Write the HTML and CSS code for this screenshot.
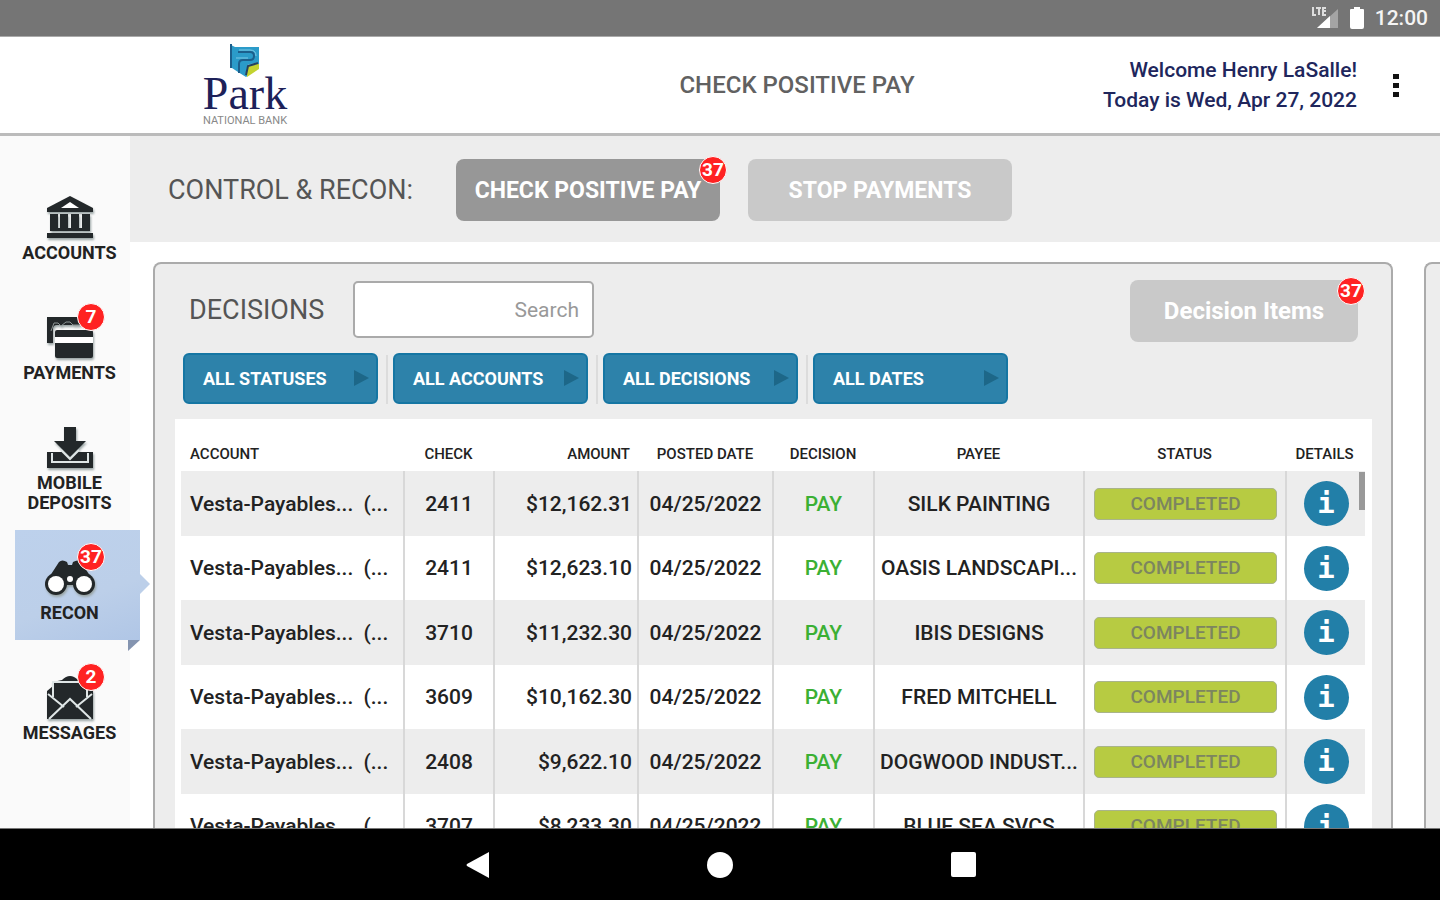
FILE: index.html
```html
<!DOCTYPE html>
<html lang="en">

<head>
    <meta charset="utf-8">
    <meta name="viewport" content="width=device-width, initial-scale=1.0">
    <title>Check Positive Pay</title>
    <link rel="stylesheet" href="styles.css">
</head>

<body>
    <div class="status-bar">
        <svg class="signal" width="28" height="24" viewBox="0 0 28 24">
            <path d="M27 3v19H6z" fill="#a4a4a4" />
            <path d="M19 10v12H6z" fill="#fff" />
            <path d="M2 1v8h3M5 2h5M8 2v7M15 2h-3v7h3M12 5h3" fill="none" stroke="#ddd" stroke-width="2" />
        </svg>
        <svg class="battery" width="16" height="24" viewBox="0 0 16 24">
            <path d="M5 1h6v2h3q1 0 1 1v17q0 2-2 2H3q-2 0-2-2V4q0-1 1-1h3z" fill="#fff" />
        </svg>
        <span>12:00</span>
    </div>

    <header class="header">
        <div class="logo">
            <svg width="30" height="34" viewBox="0 0 30 34">
                <path d="M1 1l4 2h24v21l-6 4-7 5-8-5-6-4z" fill="#2b9bc9" />
                <path d="M17 24l3-4h9v5l-12 8z" fill="#c3d32f" />
                <path d="M1 0v24M8 8h12q4 0 4 4t-4 4h-7q-4 0-4 4v9" fill="none" stroke="#1c5f8c" stroke-width="2" />
                <path d="M9 6h11q6 0 6 6M6 14h12M16 30l2-9 10-2" fill="none" stroke="#7cc9e6" stroke-width="1" />
                <path d="M16 31l2-9 10-3" fill="none" stroke="#25415f" stroke-width="2" />
            </svg>
            <div class="logo-name">Park</div>
            <div class="logo-sub">NATIONAL BANK</div>
        </div>
        <h1 class="title">CHECK POSITIVE PAY</h1>
        <div class="user">
            <p class="welcome">Welcome Henry LaSalle!<br>Today is Wed, Apr 27, 2022</p>
            <button class="more" aria-label="More">
                <i></i><i></i><i></i>
            </button>
        </div>
    </header>

    <div class="content">
        <nav class="sidebar">
            <a class="nav-item" href="#">
                <svg class="nav-icon" width="48" height="48" viewBox="0 0 48 48">
                    <path d="M24 1L1 13v4h46v-4z" />
                    <path d="M24 7l-9 6h18z" fill="#fff" />
                    <path d="M4 19h8v14H4zM14 19h8v14h-8zM25 19h8v14h-8zM36 19h8v14h-8zM4 33h40v3H4zM1 38h46v5H1z" />
                </svg>
                <span>ACCOUNTS</span>
            </a>
            <a class="nav-item" href="#">
                <svg class="nav-icon" width="48" height="48" viewBox="0 0 48 48">
                    <path d="M1 2h36v8H11q-4 0-4 4v14H1z" />
                    <path d="M5 16l3-8h4l3 3 5-4h4l3 3h6" fill="none" stroke="#8d9595" stroke-width="1" />
                    <rect x="9" y="15" width="38" height="28" rx="2" />
                    <path d="M9 22h38v6H9z" fill="#fff" />
                </svg>
                <b class="badge">7</b>
                <span>PAYMENTS</span>
            </a>
            <a class="nav-item" href="#">
                <svg class="nav-icon" width="48" height="48" viewBox="0 0 48 48">
                    <path d="M18 2h12v14h10L24 32 8 16h10z" />
                    <path d="M1 27h8l8 0 7 7 7-7h16v16H1z" />
                    <path d="M6 28v9h36v-9M15 25l9 9 9-9" fill="none" stroke="#dfe6e6" stroke-width="2" />
                </svg>
                <span>MOBILE<br>DEPOSITS</span>
            </a>
            <a class="nav-item active" href="#">
                <svg class="nav-icon" width="52" height="48" viewBox="0 0 52 48">
                    <path d="M4 24L15 7q3-3 8 0l1 3h4l1-3q5-3 8 0l11 17-10 6H14z" />
                    <circle cx="12" cy="29" r="11" />
                    <circle cx="40" cy="29" r="11" />
                    <circle cx="12" cy="29" r="8" fill="#fff" />
                    <circle cx="40" cy="29" r="8" fill="#fff" />
                    <circle cx="26" cy="24" r="3" fill="#fff" />
                </svg>
                <b class="badge">37</b>
                <span>RECON</span>
            </a>
            <a class="nav-item" href="#">
                <svg class="nav-icon" width="48" height="48" viewBox="0 0 48 48">
                    <path d="M1 16l6-5V7l9-2q8-8 16 0l9 2v4l6 5v28H1z" />
                    <path d="M7 22V7h34v15M2 19l16 13M46 19L30 32M3 44l21-20 21 20" fill="none" stroke="#dfe6e6" stroke-width="2" />
                </svg>
                <b class="badge">2</b>
                <span>MESSAGES</span>
            </a>
        </nav>

        <main class="main">
            <div class="toolbar">
                <h2 class="toolbar-label">CONTROL &amp; RECON:</h2>
                <button class="btn btn-dark">CHECK POSITIVE PAY<b class="badge">37</b></button>
                <button class="btn">STOP PAYMENTS</button>
            </div>

            <div class="panels">
                <section class="panel">
                    <div class="panel-head">
                        <h2 class="panel-title">DECISIONS</h2>
                        <input class="search" type="text" placeholder="Search" aria-label="Search">
                        <button class="btn btn-items">Decision Items<b class="badge">37</b></button>
                    </div>
                    <div class="filters">
                        <button class="filter">ALL STATUSES</button>
                        <button class="filter">ALL ACCOUNTS</button>
                        <button class="filter">ALL DECISIONS</button>
                        <button class="filter">ALL DATES</button>
                    </div>
                    <div class="table-box">
                        <table>
                            <colgroup>
                                <col class="c-account">
                                <col class="c-check">
                                <col class="c-amount">
                                <col class="c-date">
                                <col class="c-decision">
                                <col>
                                <col class="c-status">
                                <col class="c-details">
                            </colgroup>
                            <thead>
                                <tr>
                                    <th class="account">ACCOUNT</th>
                                    <th>CHECK</th>
                                    <th class="amount">AMOUNT</th>
                                    <th>POSTED DATE</th>
                                    <th>DECISION</th>
                                    <th>PAYEE</th>
                                    <th>STATUS</th>
                                    <th>DETAILS</th>
                                </tr>
                            </thead>
                            <tbody>
                                <tr>
                                    <td class="account"><span>Vesta-Payables...</span> <span>(...</span></td>
                                    <td>2411</td>
                                    <td class="amount">$12,162.31</td>
                                    <td>04/25/2022</td>
                                    <td class="pay">PAY</td>
                                    <td>SILK PAINTING</td>
                                    <td><span class="status">COMPLETED</span></td>
                                    <td><button class="info" aria-label="Details">i</button></td>
                                </tr>
                                <tr>
                                    <td class="account"><span>Vesta-Payables...</span> <span>(...</span></td>
                                    <td>2411</td>
                                    <td class="amount">$12,623.10</td>
                                    <td>04/25/2022</td>
                                    <td class="pay">PAY</td>
                                    <td>OASIS LANDSCAPI...</td>
                                    <td><span class="status">COMPLETED</span></td>
                                    <td><button class="info" aria-label="Details">i</button></td>
                                </tr>
                                <tr>
                                    <td class="account"><span>Vesta-Payables...</span> <span>(...</span></td>
                                    <td>3710</td>
                                    <td class="amount">$11,232.30</td>
                                    <td>04/25/2022</td>
                                    <td class="pay">PAY</td>
                                    <td>IBIS DESIGNS</td>
                                    <td><span class="status">COMPLETED</span></td>
                                    <td><button class="info" aria-label="Details">i</button></td>
                                </tr>
                                <tr>
                                    <td class="account"><span>Vesta-Payables...</span> <span>(...</span></td>
                                    <td>3609</td>
                                    <td class="amount">$10,162.30</td>
                                    <td>04/25/2022</td>
                                    <td class="pay">PAY</td>
                                    <td>FRED MITCHELL</td>
                                    <td><span class="status">COMPLETED</span></td>
                                    <td><button class="info" aria-label="Details">i</button></td>
                                </tr>
                                <tr>
                                    <td class="account"><span>Vesta-Payables...</span> <span>(...</span></td>
                                    <td>2408</td>
                                    <td class="amount">$9,622.10</td>
                                    <td>04/25/2022</td>
                                    <td class="pay">PAY</td>
                                    <td>DOGWOOD INDUST...</td>
                                    <td><span class="status">COMPLETED</span></td>
                                    <td><button class="info" aria-label="Details">i</button></td>
                                </tr>
                                <tr>
                                    <td class="account"><span>Vesta-Payables...</span> <span>(...</span></td>
                                    <td>3707</td>
                                    <td class="amount">$8,233.30</td>
                                    <td>04/25/2022</td>
                                    <td class="pay">PAY</td>
                                    <td>BLUE SEA SVCS</td>
                                    <td><span class="status">COMPLETED</span></td>
                                    <td><button class="info" aria-label="Details">i</button></td>
                                </tr>
                            </tbody>
                        </table>
                        <div class="scroll-thumb"></div>
                    </div>
                </section>
                <section class="panel panel-next"></section>
            </div>
        </main>
    </div>

    <footer class="android-nav">
        <button aria-label="Back">
            <svg width="28" height="28" viewBox="0 0 28 28">
                <path d="M26 1v26L4 15q-1-1 0-2z" fill="#fff" />
            </svg>
        </button>
        <button aria-label="Home">
            <svg width="28" height="28" viewBox="0 0 28 28">
                <circle cx="14" cy="14" r="13" fill="#fff" />
            </svg>
        </button>
        <button aria-label="Recents">
            <svg width="28" height="28" viewBox="0 0 28 28">
                <rect x="2" y="1" width="25" height="25" rx="2" fill="#fff" />
            </svg>
        </button>
    </footer>
</body>

</html>
```
FILE: styles.css
```css
* {
    box-sizing: border-box;
}

body {
    margin: 0;
    height: 100vh;
    display: flex;
    flex-direction: column;
    overflow: hidden;
    font-family: Roboto, "Liberation Sans", sans-serif;
    background-color: #fff;
    color: #222;
}

button {
    border: none;
    padding: 0;
    background: none;
    font-family: inherit;
    cursor: pointer;
}

h1,
h2,
p {
    margin: 0;
    font-weight: normal;
}

.status-bar {
    flex: none;
    height: 36px;
    display: flex;
    align-items: center;
    justify-content: flex-end;
    padding-right: 12px;
    background-color: #757575;
    color: #f4f4f4;
    font-size: 21px;
    font-weight: 500;
}

.battery {
    margin: 0 10px;
}

/* header */
.header {
    flex: none;
    height: 100px;
    display: grid;
    grid-template-columns: 490px 1fr 336px;
    align-items: center;
    border-top: 1px solid #aaa;
    border-bottom: 3px solid #bbb;
}

.logo {
    display: flex;
    flex-direction: column;
    align-items: center;
}

.logo-name {
    margin-top: -6px;
    font-family: "Liberation Serif", serif;
    font-size: 46px;
    line-height: 44px;
    color: #1d2159;
}

.logo-sub {
    font-size: 11px;
    line-height: 10px;
    color: #888;
}

.title {
    text-align: center;
    font-size: 24px;
    font-weight: 500;
    color: #616161;
}

.user {
    display: flex;
    align-items: center;
    justify-content: flex-end;
    padding-right: 41px;
}

.welcome {
    font-size: 21px;
    line-height: 30px;
    font-weight: 500;
    text-align: right;
    white-space: nowrap;
    color: #20265c;
}

.more {
    display: flex;
    flex-direction: column;
    gap: 4px;
    margin-left: 36px;
}

.more i {
    width: 6px;
    height: 5px;
    background-color: #111;
}

/* left navigation */
.content {
    flex: 1;
    min-height: 0;
    display: flex;
    border-bottom: 1px solid #777;
}

.sidebar {
    position: relative;
    z-index: 1;
    flex: none;
    width: 130px;
    display: flex;
    flex-direction: column;
    gap: 10px;
    padding-top: 34px;
    background-color: #fafafa;
}

.nav-item {
    position: relative;
    flex: none;
    height: 110px;
    margin: 0 -10px 0 15px;
    padding: 8px 16px 0 0;
    display: flex;
    flex-direction: column;
    align-items: center;
    justify-content: center;
    font-size: 18px;
    line-height: 20px;
    font-weight: 700;
    text-align: center;
    text-decoration: none;
    color: #222;
}

.nav-icon {
    fill: #23282a;
    filter: drop-shadow(1px 2px 1px #9aa5a5);
}

.nav-item.active {
    background: linear-gradient(160deg, #bdd1ec, #bccfe9 60%, #b0c6e6);
}

.nav-item.active::before {
    content: '';
    position: absolute;
    right: 0;
    top: 100%;
    border-top: 11px solid #8494b0;
    border-right: 12px solid transparent;
}

.nav-item.active::after {
    content: '';
    position: absolute;
    left: 100%;
    top: 44px;
    border-left: 10px solid #bccfe9;
    border-top: 10px solid transparent;
    border-bottom: 10px solid transparent;
}

.badge {
    position: absolute;
    width: 28px;
    height: 28px;
    border: 1px solid #fff;
    border-radius: 50%;
    background-color: #f22;
    color: #fff;
    font-size: 19px;
    line-height: 26px;
    font-weight: 700;
    text-align: center;
}

.nav-item .badge {
    top: 13px;
    right: 35px;
}

/* toolbar */
.main {
    flex: 1;
    min-width: 0;
    display: flex;
    flex-direction: column;
}

.toolbar {
    flex: none;
    height: 106px;
    display: flex;
    align-items: center;
    gap: 28px;
    padding: 2px 0 0 38px;
    background-color: #ededed;
}

.toolbar-label {
    width: 260px;
    font-size: 27px;
    white-space: nowrap;
    color: #555;
}

.btn {
    position: relative;
    width: 264px;
    height: 62px;
    border-radius: 8px;
    background-color: #c9c9c9;
    color: #fff;
    font-size: 23px;
    font-weight: 700;
}

.btn-dark {
    background-color: #979797;
}

.btn .badge {
    top: -3px;
    right: -7px;
}

/* panels */
.panels {
    flex: 1;
    min-height: 0;
    display: flex;
    gap: 31px;
    padding: 20px 0 0 23px;
    overflow: hidden;
}

.panel {
    flex: 1;
    min-width: 0;
    border: 2px solid #ababab;
    border-bottom: none;
    border-radius: 8px 8px 0 0;
    padding: 15px 19px 0 20px;
    background-color: #ededed;
}

.panel-next {
    flex: 0 0 16px;
    padding: 0;
    border-right: none;
    border-radius: 8px 0 0 0;
}

.panel-head {
    display: flex;
    align-items: center;
    height: 60px;
    padding-left: 14px;
}

.panel-title {
    width: 164px;
    padding-top: 2px;
    font-size: 27px;
    color: #555;
}

.search {
    width: 241px;
    height: 57px;
    padding: 2px 13px 0;
    border: 2px solid #aaa;
    border-radius: 5px;
    font-family: inherit;
    font-size: 21px;
    text-align: right;
    background-color: #fff;
}

.search::placeholder {
    color: #999;
}

.btn-items {
    width: 228px;
    margin: 4px 14px 0 auto;
    font-size: 24px;
}

.filters {
    display: flex;
    gap: 15px;
    margin-top: 14px;
    padding-left: 8px;
}

.filter {
    position: relative;
    width: 195px;
    height: 51px;
    padding-left: 18px;
    border: 2px solid #1576a3;
    border-radius: 6px;
    background-color: #2d82aa;
    color: #fff;
    font-size: 18px;
    font-weight: 700;
    text-align: left;
}

.filter::after {
    content: '';
    position: absolute;
    right: 7px;
    top: 15px;
    border-left: 15px solid #1d6788;
    border-top: 8px solid transparent;
    border-bottom: 8px solid transparent;
}

.filter + .filter::before {
    content: '';
    position: absolute;
    left: -9px;
    top: 0;
    width: 2px;
    height: 49px;
    background-color: #dcdcdc;
}

/* decisions table */
.table-box {
    position: relative;
    margin-top: 15px;
    padding: 0 7px 0 6px;
    background-color: #fff;
}

table {
    width: 100%;
    table-layout: fixed;
    border-collapse: separate;
    border-spacing: 0;
    text-align: center;
    white-space: nowrap;
}

.c-account {
    width: 224px;
}

.c-check {
    width: 90px;
}

.c-amount {
    width: 144px;
}

.c-date {
    width: 135px;
}

.c-decision {
    width: 101px;
}

.c-status {
    width: 202px;
}

.c-details {
    width: 78px;
}

th {
    height: 52px;
    padding: 18px 3px 0 0;
    font-size: 15px;
    font-weight: 500;
}

td {
    height: 65px;
    padding: 0;
    border-right: 2px solid #d8d8d8;
    font-size: 21px;
    font-weight: 500;
}

tbody tr:nth-child(even) td {
    height: 64px;
}

td:last-child {
    border-right: none;
}

tbody tr:nth-child(odd) {
    background-color: #ededed;
}

.account {
    padding-left: 9px;
    text-align: left;
}

.account span + span {
    margin-left: 5px;
}

.amount {
    padding-right: 5px;
    text-align: right;
}

th.amount {
    padding-right: 9px;
}

.pay {
    color: #3bb034;
}

.status {
    display: block;
    height: 32px;
    margin: 0 8px 0 9px;
    border: 1px solid #a9b48a;
    border-radius: 5px;
    background-color: #b7cb42;
    color: #7c8560;
    font-size: 19px;
    line-height: 30px;
}

.info {
    width: 45px;
    height: 45px;
    border-radius: 50%;
    background-color: #227fa8;
    color: #fff;
    font-family: "DejaVu Sans Mono", monospace;
    font-size: 29px;
    line-height: 45px;
    font-weight: 700;
    vertical-align: middle;
}

.scroll-thumb {
    position: absolute;
    top: 53px;
    right: 7px;
    width: 6px;
    height: 38px;
    background-color: #999;
}

/* system buttons */
.android-nav {
    flex: none;
    height: 71px;
    display: flex;
    align-items: center;
    justify-content: center;
    gap: 215px;
    background-color: #000;
}

.android-nav svg {
    display: block;
}
```
